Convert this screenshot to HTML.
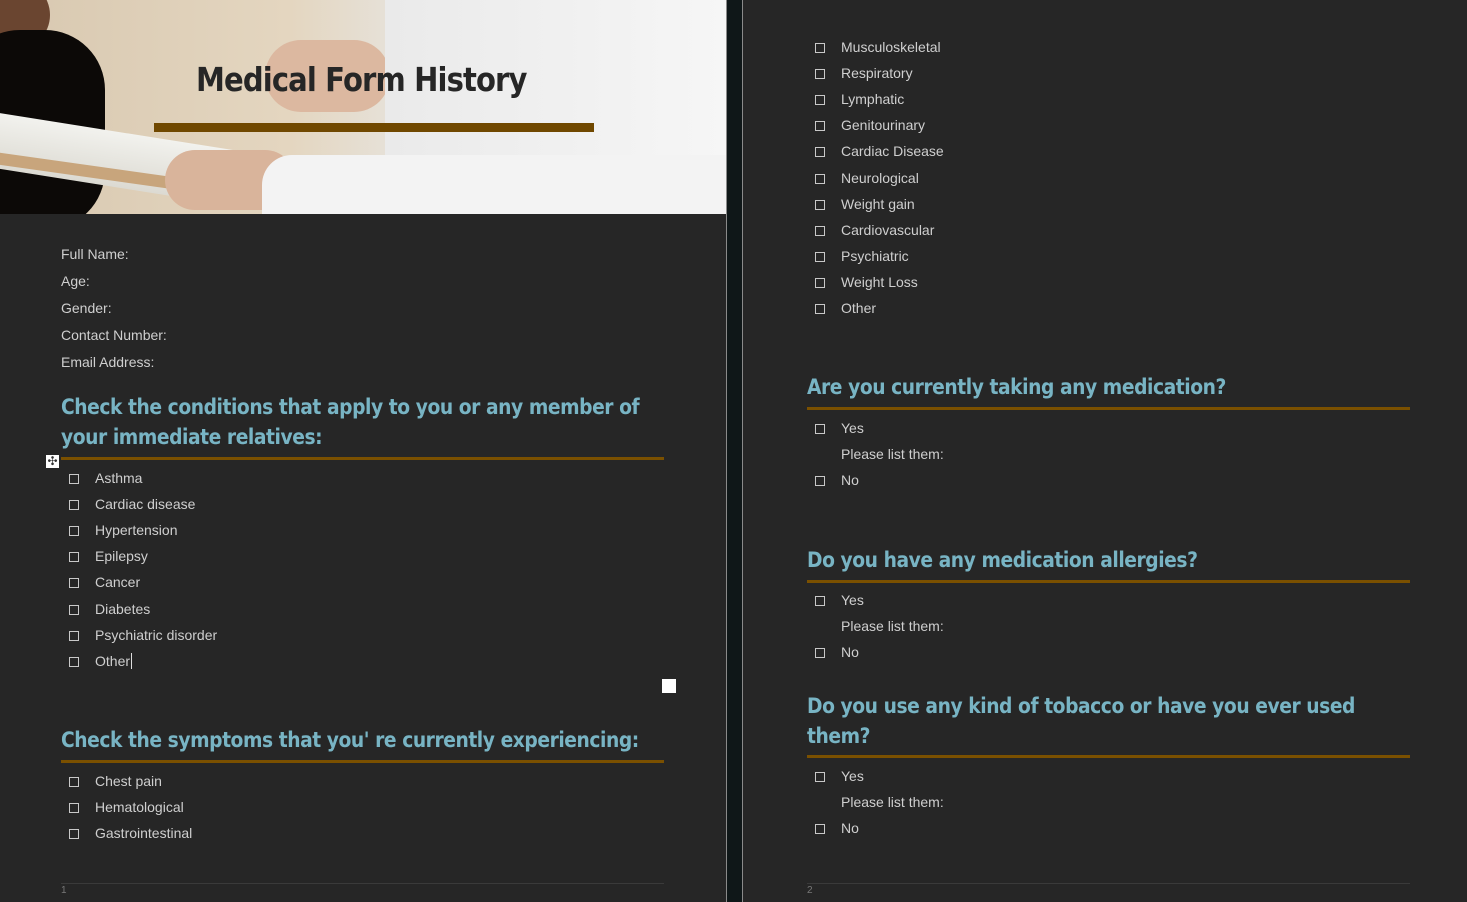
<!DOCTYPE html><html><head><style>
body{margin:0;width:1467px;height:902px;background:#262626;position:relative;overflow:hidden;font-family:"Liberation Sans",sans-serif;color:#d0d0d0}
.a{position:absolute;white-space:nowrap}
.t{font-size:14px;color:#cfcfcf}
.h{font-size:21px;font-weight:bold;color:#78b4c4;font-family:"DejaVu Sans","Liberation Sans",sans-serif;letter-spacing:-0.5px;line-height:30px;transform:scaleX(0.89);transform-origin:0 0}
.ln{position:absolute;height:3px;background:#7a5000}
.cb{position:absolute;width:8px;height:8px;border:1px solid #c8c8c8}
</style></head><body>
<div class="a" style="left:0;top:0;width:726px;height:214px;overflow:hidden;background:linear-gradient(90deg,#d8c8b0 0,#e4d6c0 40%,#e6e2da 55%,#eeeeee 75%,#f4f4f4 100%)">
 <div class="a" style="left:-30px;top:-20px;width:80px;height:70px;background:#6a4530;border-radius:40px"></div>
 <div class="a" style="left:-40px;top:30px;width:145px;height:200px;background:#0c0907;border-radius:60px"></div>
 <div class="a" style="left:-20px;top:110px;width:520px;height:55px;background:linear-gradient(180deg,#f2f2ee,#dcdad2);transform:rotate(9deg);transform-origin:0 0"></div>
 <div class="a" style="left:-20px;top:150px;width:380px;height:12px;background:#c8a57c;transform:rotate(8deg);transform-origin:0 0"></div>
 <div class="a" style="left:265px;top:40px;width:125px;height:72px;background:#dcb8a0;border-radius:36px"></div>
 <div class="a" style="left:165px;top:150px;width:130px;height:60px;background:#d9b49b;border-radius:30px"></div>
 <div class="a" style="left:385px;top:0;width:345px;height:214px;background:linear-gradient(90deg,#eaeaea,#f6f6f6)"></div>
 <div class="a" style="left:262px;top:155px;width:470px;height:70px;background:#f3f3f3;border-radius:30px 0 0 0"></div>
</div>
<div class="a" style="left:196px;top:60px;font-size:33px;font-weight:bold;color:#262626;font-family:'DejaVu Sans',sans-serif;letter-spacing:-1px;transform:scaleX(0.88);transform-origin:0 0">Medical Form History</div>
<div class="a" style="left:154px;top:123px;width:440px;height:9px;background:#704800"></div>
<div class="a" style="left:726px;top:0;width:1px;height:902px;background:#8a8a8a"></div>
<div class="a" style="left:727px;top:0;width:15px;height:902px;background:#0f1718"></div>
<div class="a" style="left:742px;top:0;width:1px;height:902px;background:#8a8a8a"></div>

<div class="a t" style="left:61px;top:246px">Full Name:</div>
<div class="a t" style="left:61px;top:273px">Age:</div>
<div class="a t" style="left:61px;top:300px">Gender:</div>
<div class="a t" style="left:61px;top:327px">Contact Number:</div>
<div class="a t" style="left:61px;top:354px">Email Address:</div>
<div class="a h" style="left:61px;top:392px">Check the conditions that apply to you or any member of<br>your immediate relatives:</div>
<div class="ln" style="left:61px;top:457px;width:603px"></div>
<div class="a" style="left:46px;top:455px;width:13px;height:13px;background:#fff;color:#333;font-size:12px;line-height:13px;text-align:center">✣</div>
<div class="a h" style="left:61px;top:725px">Check the symptoms that you' re currently experiencing:</div>
<div class="ln" style="left:61px;top:760px;width:603px"></div>
<div class="a" style="left:662px;top:679px;width:14px;height:14px;background:#fff"></div>
<div class="a" style="left:61px;top:883px;width:603px;height:1px;background:#3a3a3a"></div>
<div class="a" style="left:61px;top:885px;font-size:10px;color:#777">1</div>
<div class="a" style="left:807px;top:883px;width:603px;height:1px;background:#3a3a3a"></div>
<div class="a" style="left:807px;top:885px;font-size:10px;color:#777">2</div>

<div class="a h" style="left:807px;top:372px">Are you currently taking any medication?</div>
<div class="ln" style="left:807px;top:407px;width:603px"></div>
<div class="a h" style="left:807px;top:545px">Do you have any medication allergies?</div>
<div class="ln" style="left:807px;top:580px;width:603px"></div>
<div class="a h" style="left:807px;top:691px">Do you use any kind of tobacco or have you ever used<br>them?</div>
<div class="ln" style="left:807px;top:755px;width:603px"></div>
<div class="a t" style="left:841px;top:446px">Please list them:</div>
<div class="a t" style="left:841px;top:618px">Please list them:</div>
<div class="a t" style="left:841px;top:794px">Please list them:</div>

<script>
function L(x,y0,items,step){items.forEach((s,i)=>{var y=y0+i*step;document.write('<div class="cb" style="left:'+(x-26)+'px;top:'+(y+4)+'px"></div><div class="a t" style="left:'+x+'px;top:'+y+'px">'+s+'</div>')})}
L(95,470,["Asthma","Cardiac disease","Hypertension","Epilepsy","Cancer","Diabetes","Psychiatric disorder","Other"],26.1);
L(95,773,["Chest pain","Hematological","Gastrointestinal"],26);
L(841,39,["Musculoskeletal","Respiratory","Lymphatic","Genitourinary","Cardiac Disease","Neurological","Weight gain","Cardiovascular","Psychiatric","Weight Loss","Other"],26.1);
L(841,420,["Yes"],26);L(841,472,["No"],26);
L(841,592,["Yes"],26);L(841,644,["No"],26);
L(841,768,["Yes"],26);L(841,820,["No"],26);
</script>
<div class="a" style="left:131px;top:653px;width:1px;height:16px;background:#ddd"></div>
</body></html>
